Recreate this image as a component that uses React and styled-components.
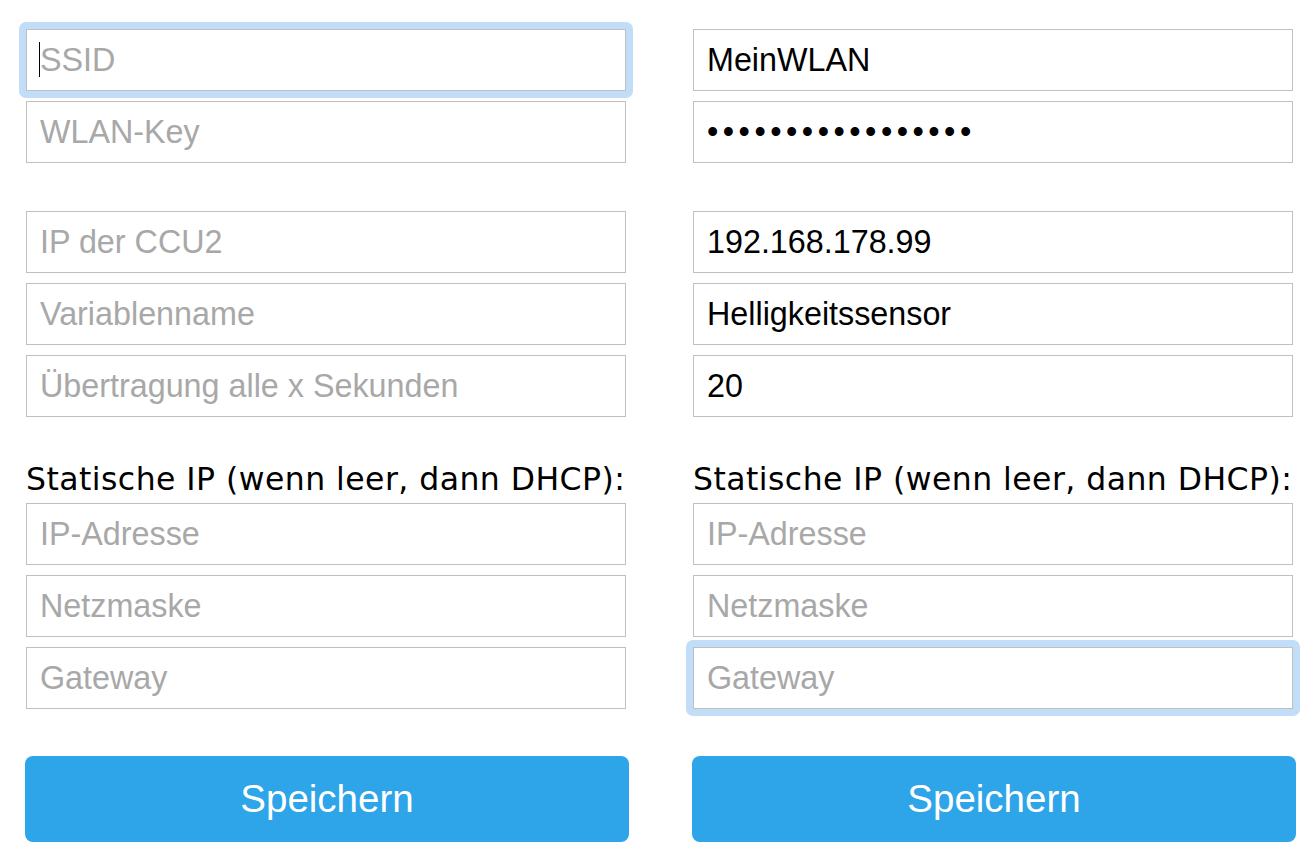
import React from "react";
import styled, { createGlobalStyle } from "styled-components";

const GlobalStyle = createGlobalStyle`
  html, body {
    margin: 0;
    padding: 0;
    background: #ffffff;
  }
  body {
    font-family: "Liberation Sans", Arial, sans-serif;
  }
`;

const Page = styled.div`
  display: grid;
  grid-template-columns: 600px 600px;
  column-gap: 67px;
  padding: 29px 0 0 26px;
`;

const Form = styled.form`
  display: flex;
  flex-direction: column;
`;

const Group = styled.div`
  display: flex;
  flex-direction: column;
  gap: 10px;
  margin-bottom: ${(p) => p.$after || 0}px;
`;

const FieldWrap = styled.div`
  position: relative;
  margin: -7px;
  padding: 7px;
  border-radius: 7px;
  background: ${(p) => (p.$focused ? "#c1ddf8" : "transparent")};
`;

const Input = styled.input`
  display: block;
  box-sizing: border-box;
  width: 600px;
  height: 62px;
  margin: 0;
  padding: 0 13px;
  border: 1px solid #c0c0c0;
  border-radius: 0;
  background: #ffffff;
  color: #000000;
  font-family: "Liberation Sans", Arial, sans-serif;
  font-size: 32.3px;
  outline: none;
  letter-spacing: ${(p) => (p.type === "password" ? "4.5px" : "0")};

  &::placeholder {
    color: #a8a8a8;
    letter-spacing: 0;
  }
`;

const Caret = styled.span`
  position: absolute;
  left: 20px;
  top: 20px;
  width: 1px;
  height: 35px;
  background: #000000;
`;

const Label = styled.div`
  font-family: "DejaVu Sans", Verdana, sans-serif;
  font-size: 31.5px;
  letter-spacing: 0.45px;
  line-height: 35px;
  color: #000000;
  white-space: nowrap;
  margin-bottom: 6px;
`;

const SaveButton = styled.button`
  box-sizing: border-box;
  width: 604px;
  height: 86px;
  margin: 0 0 0 -1px;
  border: none;
  border-radius: 8px;
  background: #2ea4e9;
  color: #ffffff;
  font-family: "Liberation Sans", Arial, sans-serif;
  font-size: 38.5px;
  cursor: pointer;
`;

function Field({ focused, caret, ...rest }) {
  return (
    <FieldWrap $focused={focused}>
      <Input {...rest} />
      {caret && <Caret />}
    </FieldWrap>
  );
}

function ConfigForm({ values, focus, caret }) {
  const v = values || {};
  return (
    <Form onSubmit={(e) => e.preventDefault()}>
      <Group $after={48}>
        <Field placeholder="SSID" defaultValue={v.ssid} focused={focus === "ssid"} caret={caret} />
        <Field type="password" placeholder="WLAN-Key" defaultValue={v.key} />
      </Group>
      <Group $after={45}>
        <Field placeholder="IP der CCU2" defaultValue={v.ccu} />
        <Field placeholder="Variablenname" defaultValue={v.variable} />
        <Field placeholder="Übertragung alle x Sekunden" defaultValue={v.interval} />
      </Group>
      <Label>Statische IP (wenn leer, dann DHCP):</Label>
      <Group $after={47}>
        <Field placeholder="IP-Adresse" />
        <Field placeholder="Netzmaske" />
        <Field placeholder="Gateway" focused={focus === "gateway"} />
      </Group>
      <SaveButton type="submit">Speichern</SaveButton>
    </Form>
  );
}

export default function App() {
  return (
    <>
      <GlobalStyle />
      <Page>
        <ConfigForm focus="ssid" caret />
        <ConfigForm
          focus="gateway"
          values={{
            ssid: "MeinWLAN",
            key: "geheimesPasswort1",
            ccu: "192.168.178.99",
            variable: "Helligkeitssensor",
            interval: "20",
          }}
        />
      </Page>
    </>
  );
}
